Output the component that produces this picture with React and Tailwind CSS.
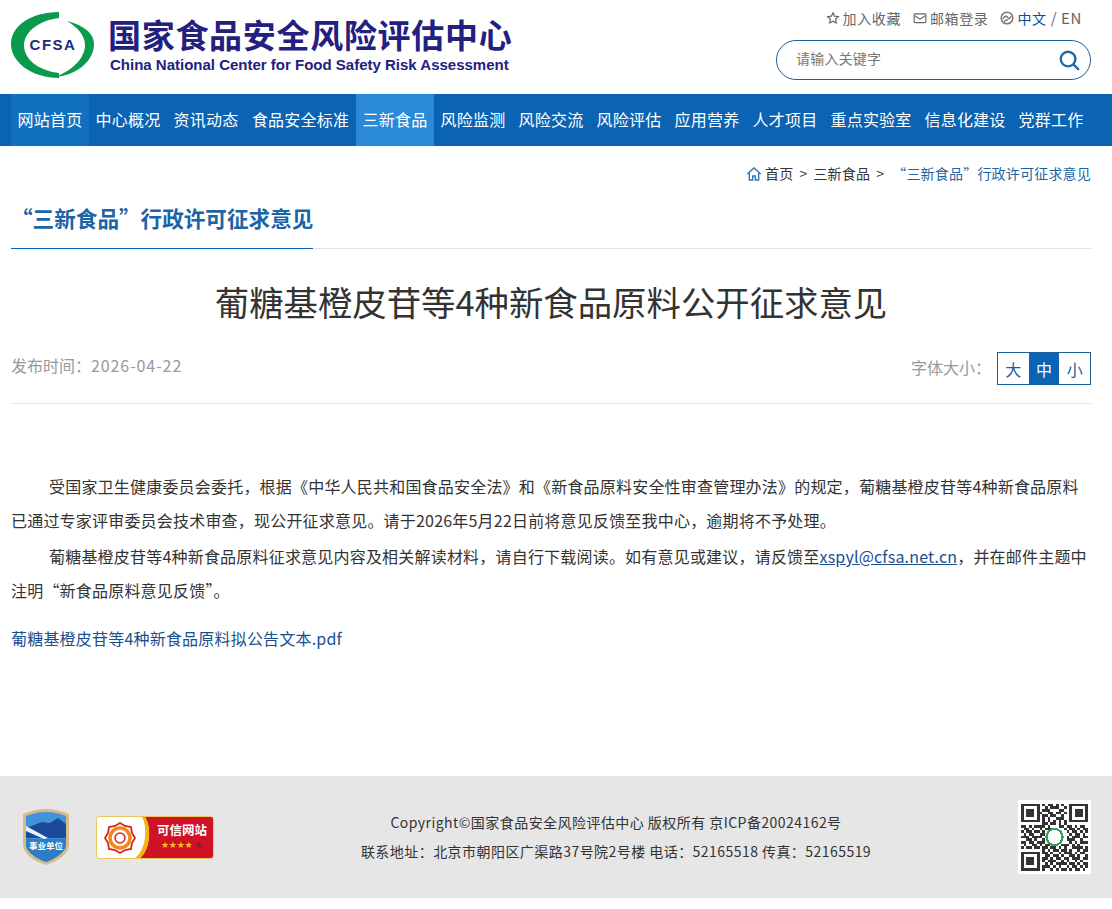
const navItems = [
  { label: '网站首页', w: 'w-[78px]', className: 'bg-[#1170bf]' },
  { label: '中心概况', w: 'w-[78px]' },
  { label: '资讯动态', w: 'w-[78px]' },
  { label: '食品安全标准', w: 'w-[111px]' },
  { label: '三新食品', w: 'w-[78px]', className: 'bg-[#2a8ad8]' },
  { label: '风险监测', w: 'w-[78px]' },
  { label: '风险交流', w: 'w-[78px]' },
  { label: '风险评估', w: 'w-[78px]' },
  { label: '应用营养', w: 'w-[78px]' },
  { label: '人才项目', w: 'w-[78px]' },
  { label: '重点实验室', w: 'w-[94px]' },
  { label: '信息化建设', w: 'w-[94px]' },
  { label: '党群工作', w: 'w-[78px]' }
];

const font = "font-['Noto_Sans_CJK_SC','Noto_Sans',sans-serif]";

const CfsaLogo = () => (
  <svg width="84" height="68" viewBox="0 0 84 68" className="shrink-0">
    <path d="M48 1 C20 1 0 15 0 33 C0 52 22 67 48 67 L48 62 C30 60 13 50 13 34 C13 20 30 9 48 7 Z" fill="#0a9a4b" />
    <path d="M56 10 C72 14 83 22 83 33 C83 50 66 64 44 66 C60 60 74 48 74 34 C74 24 66 16 56 10 Z" fill="#0a9a4b" />
    <text x="42" y="39" textAnchor="middle" fontSize="15" fontWeight="700" letterSpacing="1.5" fill="#232a7a" fontFamily="Liberation Sans, sans-serif">CFSA</text>
  </svg>
);

const Badge = () => (
  <svg width="48" height="58" viewBox="0 0 48 58">
    <path d="M24 1 C32 1 40 3 47 6 L47 36 C47 46 36 53 24 57 C12 53 1 46 1 36 L1 6 C8 3 16 1 24 1 Z" fill="#d8b98a" />
    <path d="M24 4 C32 4 38 6 44 8 L44 36 C44 44 34 50 24 54 C14 50 4 44 4 36 L4 8 C10 6 16 4 24 4 Z" fill="#3f94dc" />
    <path d="M4 20 L20 14 L28 15 L36 10 L44 16 L44 30 L4 30 Z" fill="#1b4a98" />
    <path d="M4 18 L26 30 L22 31 L4 23 Z" fill="#e8f1f8" />
    <path d="M4 31 L44 31 L44 36 C44 44 34 50 24 54 C14 50 4 44 4 36 Z" fill="#2d7cc4" />
    <text x="24" y="41" textAnchor="middle" fontSize="8.5" fontWeight="700" fill="#ffffff" fontFamily="Noto Sans CJK SC, sans-serif">事业单位</text>
  </svg>
);

const TrustBadge = () => (
  <svg width="118" height="43" viewBox="0 0 118 43">
    <rect x="0.5" y="0.5" width="117" height="42" rx="3" fill="#ffffff" stroke="#ecc75a" />
    <path d="M49 1 L115 1 Q117 1 117 3 L117 40 Q117 42 115 42 L44 42 C54 34 56 12 49 1 Z" fill="#cf1225" />
    <path d="M49 1 C56 12 54 34 44 42 L39 42 C50 34 52 12 46 1 Z" fill="#f5b50e" />
    <path d="M24 7 L29 10 L35 11 L36 17 L39 22 L36 27 L35 33 L29 34 L24 37 L19 34 L13 33 L12 27 L9 22 L12 17 L13 11 L19 10 Z" fill="none" stroke="#d8261c" strokeWidth="1.8" />
    <circle cx="24" cy="22" r="10" fill="none" stroke="#ee8a1c" strokeWidth="3.5" />
    <circle cx="24" cy="22" r="5" fill="#ffffff" stroke="#d8261c" strokeWidth="1.5" />
    <text x="61" y="19" fontSize="12.5" fontWeight="700" fill="#ffffff" fontFamily="Noto Sans CJK SC, sans-serif">可信网站</text>
    <text x="65" y="32" fontSize="9" letterSpacing="-0.2" fill="#f6c21c" fontFamily="DejaVu Sans, sans-serif">★★★★</text>
    <text x="99" y="32" fontSize="9" fill="#8f1b1f" fontFamily="DejaVu Sans, sans-serif">★</text>
  </svg>
);

// rough stand-in for the QR code, modules from a fixed pattern
const qrRows = [
  '1111111010110101001111111',
  '1000001001011100101000001',
  '1011101011100011001011101',
  '1011101100110110101011101',
  '1011101011011001001011101',
  '1000001010100111001000001',
  '1111111010101010101111111',
  '0000000011011010100000000',
  '1101011110100011011010110',
  '0110100101110000101101011',
  '1011011010000000010110101',
  '0101100110000000001011010',
  '1110111100000000010111011',
  '0011010010000000011100100',
  '1101101110000000001010111',
  '0100110101100001110101000',
  '1011011011011010100111101',
  '0000000010101101101001011',
  '1111111011010010111010110',
  '1000001001101101001101001',
  '1011101011010110110111011',
  '1011101010111001010010100',
  '1011101001010111101101011',
  '1000001011101010010110101',
  '1111111010010101101011010'
];

const QrCode = () => (
  <div className="bg-white p-[3px] w-[73px] h-[74px]">
    <svg width="67" height="68" viewBox="0 0 25 25" shapeRendering="crispEdges">
      {qrRows.map((row, y) =>
        row.split('').map((c, x) => (c === '1' ? <rect key={`${x}-${y}`} x={x} y={y} width="1" height="1" fill="#333333" /> : null))
      )}
      <circle cx="12.5" cy="12.5" r="3" fill="#ffffff" stroke="#2aa55a" strokeWidth="0.8" />
    </svg>
  </div>
);

const App = () => {
  return (
    <div lang="zh-CN" className={`${font} bg-white min-h-[909px] flex flex-col text-[#333]`}>
      <header className="h-[94px] flex justify-between pl-[11px] pr-[21px] bg-white">
        <div className="flex items-start pt-[11px]">
          <CfsaLogo />
          <div className="ml-[13px] pt-[8px] w-[410px] font-['Liberation_Sans','Noto_Sans_CJK_SC',sans-serif] text-[#232080]">
            <div className="text-[33px] leading-[36px] font-bold tracking-[0.7px] whitespace-nowrap">国家食品安全风险评估中心</div>
            <div className="text-[15px] leading-[17px] mt-[1px] ml-[2px] font-bold whitespace-nowrap">China National Center for Food Safety Risk Assessment</div>
          </div>
        </div>
        <div className="w-[315px] flex flex-col items-end pt-[9px]">
          <div className="flex items-center h-[18px] text-[14px] tracking-[0.6px] text-[#666] pr-[9px]">
            <svg width="14" height="14" viewBox="0 0 24 24" fill="none" stroke="#666" strokeWidth="2" className="mr-[3px]">
              <path d="M12 3l2.8 5.9 6.4.8-4.7 4.4 1.2 6.4L12 17.4l-5.7 3.1 1.2-6.4-4.7-4.4 6.4-.8z" />
            </svg>
            <span>加入收藏</span>
            <svg width="14" height="14" viewBox="0 0 24 24" fill="none" stroke="#666" strokeWidth="2" className="ml-[12px] mr-[3px]">
              <rect x="2" y="5" width="20" height="15" rx="2" />
              <path d="M3 8l9 6 9-6" />
            </svg>
            <span>邮箱登录</span>
            <svg width="14" height="14" viewBox="0 0 24 24" fill="none" className="ml-[12px] mr-[3px]">
              <circle cx="12" cy="12" r="10" stroke="#777" strokeWidth="2.5" />
              <path d="M5 14c3-6 6-6 8-3s4 2 6-2M7 18c3-3 5-3 7-2" stroke="#777" strokeWidth="2.5" fill="none" />
            </svg>
            <span className="text-[#0b4f92]">中文</span>
            <span className="mx-[4px] text-[15px]">/</span>
            <span className="text-[15px]">EN</span>
          </div>
          <div className="mt-[13px] w-[315px] h-[40px] border border-[#1d6098] rounded-[20px] flex items-center justify-between pl-[19px] pr-[10px]">
            <span className="text-[14px] text-[#777] tracking-[0.2px] mb-[3px]">请输入关键字</span>
            <svg width="22" height="22" viewBox="0 0 24 24" fill="none" stroke="#1d6aa8" strokeWidth="2.6" strokeLinecap="round">
              <circle cx="11" cy="11" r="8" />
              <path d="M17 17l5 5" />
            </svg>
          </div>
        </div>
      </header>

      <nav className="h-[52px] bg-[#0b63b3] flex pl-[11px]">
        {navItems.map(item => (
          <a key={item.label} className={`${item.w} ${item.className || ''} h-full flex items-center justify-center pb-[2px] text-white text-[16px] tracking-[0.2px] whitespace-nowrap`}>
            {item.label}
          </a>
        ))}
      </nav>

      <main className="flex-1 pl-[11px] pr-[21px]">
        <div className="h-[55px] flex items-center justify-end text-[14px] tracking-[0.2px]">
          <svg width="16" height="16" viewBox="0 0 24 24" fill="none" stroke="#2a75b8" strokeWidth="2" className="mr-[3px]">
            <path d="M2 12L12 3l10 9M5 10v11h5v-6h4v6h5V10" />
          </svg>
          <span>首页</span>
          <span className="mx-[6px]">&gt;</span>
          <span>三新食品</span>
          <span className="mx-[6px]">&gt;</span>
          <span className="ml-[2px] text-[#1d63a6]">“三新食品”行政许可征求意见</span>
        </div>

        <div className="border-b border-[#e2e2e2] h-[48px]">
          <div className="inline-block h-[48px] border-b border-[#0b63b3] w-[302px] text-[21.6px] leading-[34px] font-bold text-[#1a64a8] whitespace-nowrap">
            “三新食品”行政许可征求意见
          </div>
        </div>

        <h1 className="text-center text-[34.4px] leading-[46px] mt-[29px] font-normal text-[#333]">
          葡糖基橙皮苷等4种新食品原料公开征求意见
        </h1>

        <div className="flex justify-between items-center h-[33px] mt-[28px]">
          <span className="text-[16px] text-[#999] mb-[8px]">发布时间：<span className="tracking-[0.9px]">2026-04-22</span></span>
          <div className="flex items-center">
            <span className="text-[16px] text-[#999] mr-[6px] mb-[3px]">字体大小：</span>
            <div className="flex border border-[#1d6098] h-[33px] w-[94px] text-[16px] text-[#1d5f9c]">
              <span className="flex-1 flex items-center justify-center">大</span>
              <span className="flex-1 flex items-center justify-center bg-[#0b63b3] text-white">中</span>
              <span className="flex-1 flex items-center justify-center">小</span>
            </div>
          </div>
        </div>

        <div className="border-b border-[#e2e2e2] mt-[18px]" />

        <div className="mt-[65px] text-[16px] leading-[34px] tracking-[0.2px] text-[#333]">
          <p className="indent-[38px]">
            受国家卫生健康委员会委托，根据《中华人民共和国食品安全法》和《新食品原料安全性审查管理办法》的规定，葡糖基橙皮苷等4种新食品原料已通过专家评审委员会技术审查，现公开征求意见。请于2026年5月22日前将意见反馈至我中心，逾期将不予处理。
          </p>
          <p className="indent-[38px] mt-[2px]">
            葡糖基橙皮苷等4种新食品原料征求意见内容及相关解读材料，请自行下载阅读。如有意见或建议，请反馈至<a className="underline text-[#1a4f8f]">xspyl@cfsa.net.cn</a>，并在邮件主题中注明“新食品原料意见反馈”。
          </p>
          <p className="mt-[14px] text-[#1a4f8f]">葡糖基橙皮苷等4种新食品原料拟公告文本.pdf</p>
        </div>
      </main>

      <footer className="h-[122px] mb-[11px] bg-[#e6e6e6] flex items-center justify-between pl-[22px] pr-[21px] text-[14px]">
        <div className="flex items-center w-[192px]">
          <Badge />
          <div className="ml-[26px]"><TrustBadge /></div>
        </div>
        <div className="text-center leading-[29px] tracking-[0.45px]">
          <div>Copyright©国家食品安全风险评估中心 版权所有 京ICP备20024162号</div>
          <div>联系地址：北京市朝阳区广渠路37号院2号楼 电话：52165518 传真：52165519</div>
        </div>
        <QrCode />
      </footer>
    </div>
  );
};

export default App;
